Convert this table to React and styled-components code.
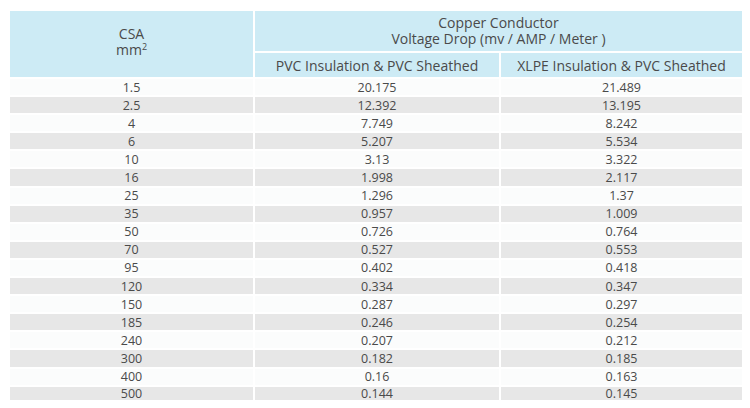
import React from 'react';
import styled, { createGlobalStyle } from 'styled-components';

const GlobalStyle = createGlobalStyle`
  body {
    margin: 0;
    background: #ffffff;
    font-family: "Open Sans", "Liberation Sans", sans-serif;
  }
`

const rows = [
  ['1.5', '20.175', '21.489'],
  ['2.5', '12.392', '13.195'],
  ['4', '7.749', '8.242'],
  ['6', '5.207', '5.534'],
  ['10', '3.13', '3.322'],
  ['16', '1.998', '2.117'],
  ['25', '1.296', '1.37'],
  ['35', '0.957', '1.009'],
  ['50', '0.726', '0.764'],
  ['70', '0.527', '0.553'],
  ['95', '0.402', '0.418'],
  ['120', '0.334', '0.347'],
  ['150', '0.287', '0.297'],
  ['185', '0.246', '0.254'],
  ['240', '0.207', '0.212'],
  ['300', '0.182', '0.185'],
  ['400', '0.16', '0.163'],
  ['500', '0.144', '0.145'],
]

function App() {
  return (
    <>
      <GlobalStyle />
      <Page>
        <Table>
          <HeadCell className="csa">
            <Line>CSA</Line>
            <Line>
              mm<sup>2</sup>
            </Line>
          </HeadCell>
          <HeadCell className="group">
            <Line>Copper Conductor</Line>
            <Line>Voltage Drop (mv / AMP / Meter )</Line>
          </HeadCell>
          <HeadCell className="sub">PVC Insulation &amp; PVC Sheathed</HeadCell>
          <HeadCell className="sub">XLPE Insulation &amp; PVC Sheathed</HeadCell>
          {rows.map((r, i) =>
            r.map((v, j) => (
              <Cell key={i + '-' + j} $striped={i % 2 === 1}>
                {v}
              </Cell>
            ))
          )}
        </Table>
      </Page>
    </>
  )
}

const Page = styled.div`
  padding: 11px 8px 0 10px;
`

const Table = styled.div`
  display: grid;
  grid-template-columns: 243px 244px 241px;
  grid-template-rows: 40px 24px repeat(17, 16.1px) 13px;
  column-gap: 2px;
  row-gap: 2px;
  color: #4a4a4a;
`

const HeadCell = styled.div`
  background: #cdebf5;
  display: flex;
  flex-direction: column;
  align-items: center;
  justify-content: center;
  text-align: center;
  font-size: 14px;
  line-height: 16px;

  &.csa {
    grid-row: 1 / span 2;
    padding-bottom: 4px;
  }
  &.group {
    grid-column: 2 / span 2;
  }
  &.sub {
    padding-top: 1px;
  }
  sup {
    font-size: 9px;
    line-height: 0;
    vertical-align: 5px;
  }
`

const Line = styled.div`
  height: 16px;
  line-height: 16px;
`

const Cell = styled.div`
  background: ${(p) => (p.$striped ? '#e7e7e7' : '#fbfcfc')};
  display: flex;
  align-items: center;
  justify-content: center;
  font-size: 12.5px;
  line-height: 13px;
`

export default App
